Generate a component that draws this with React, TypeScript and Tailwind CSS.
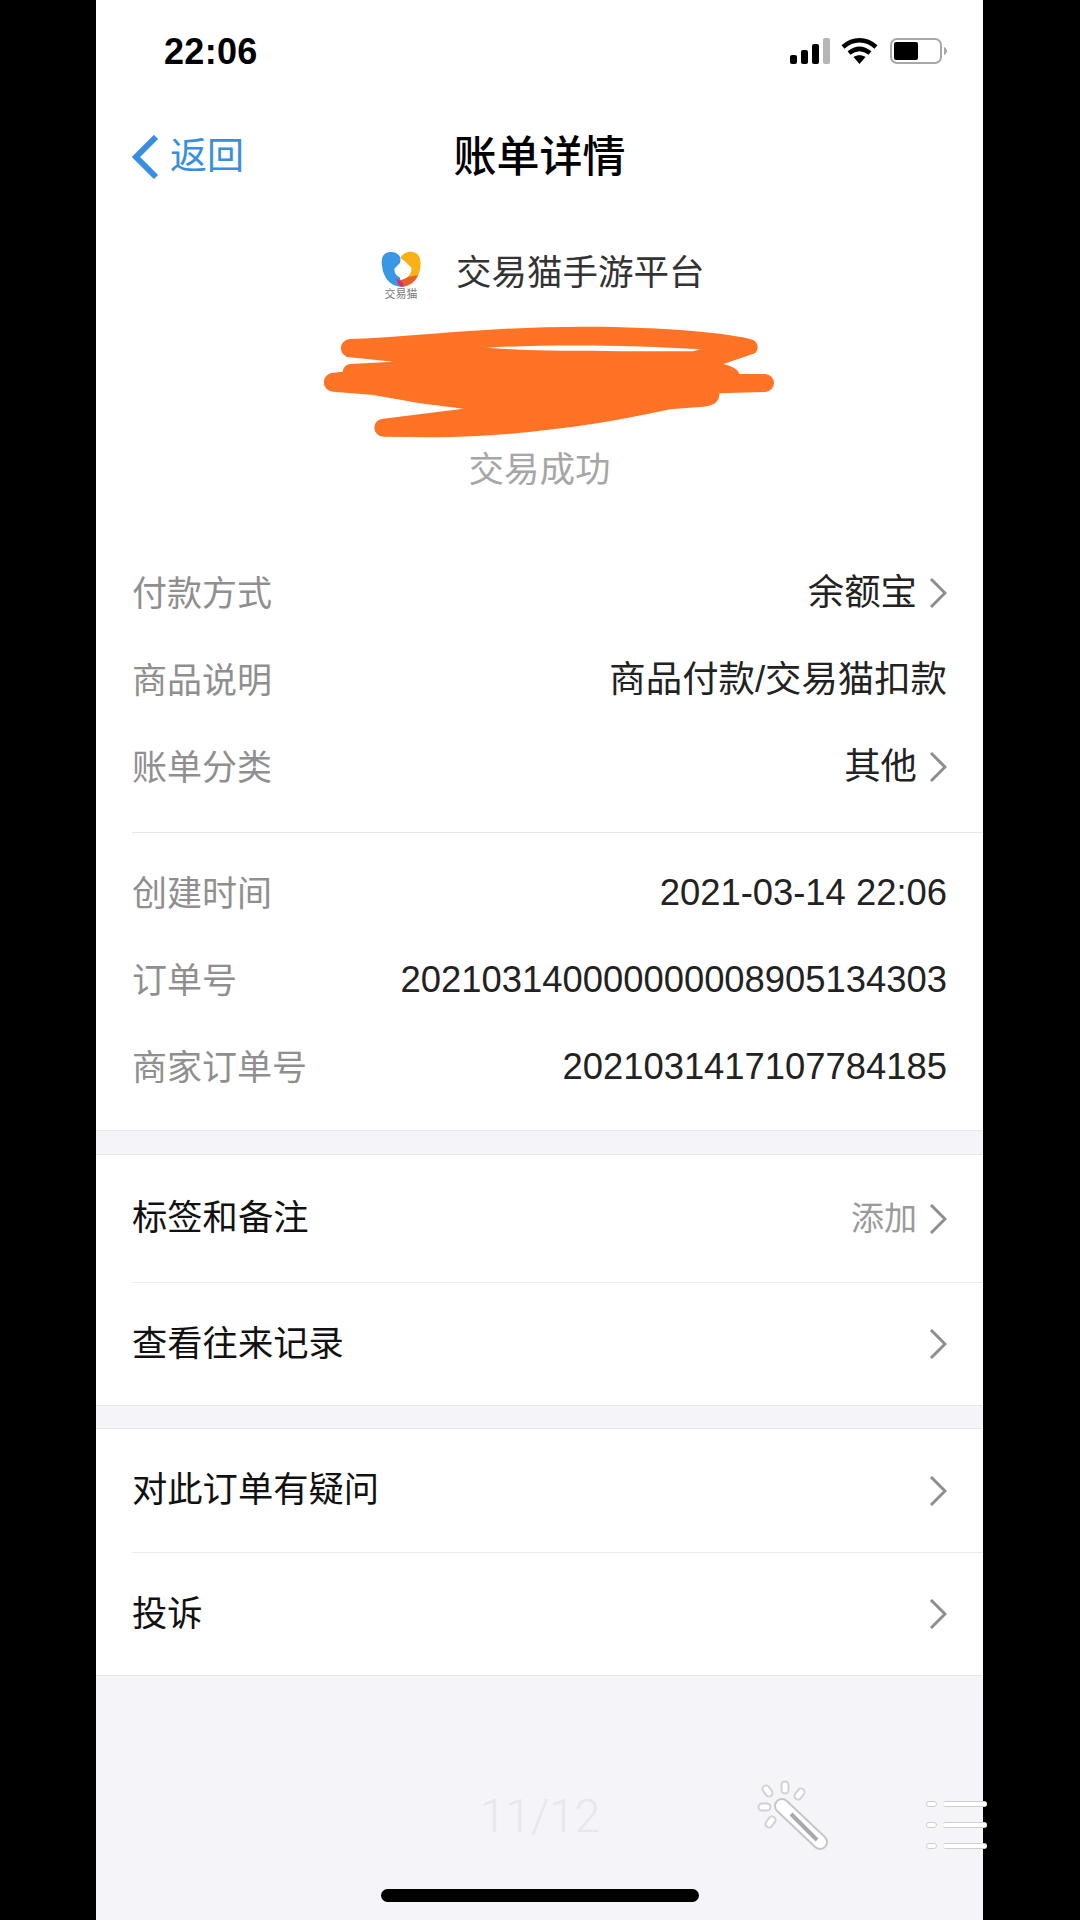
const cjk = "font-['Liberation_Sans','Noto_Sans_CJK_SC',sans-serif]";

function Chevron({ className = "" }: { className?: string }) {
  return (
    <svg width="18" height="32" viewBox="0 0 18 32" fill="none" className={className}>
      <path d="M2 2l14 14L2 30" stroke="#8e8e8e" strokeWidth="3" />
    </svg>
  );
}

function InfoRow({ label, value, arrow }: { label: string; value: string; arrow?: boolean }) {
  return (
    <div className="flex h-[87px] items-center justify-between">
      <span className="mt-[2px] text-[35px] text-[#8f8f8f]">{label}</span>
      <span className="flex items-center gap-[12px] text-[36.4px] text-[#222222]">
        {value}
        {arrow && <Chevron />}
      </span>
    </div>
  );
}

function LinkRow({ label, note, height }: { label: string; note?: string; height: string }) {
  return (
    <div className={`flex items-center justify-between pr-[36px] ${height}`}>
      <span className="text-[35.3px] text-[#111111]">{label}</span>
      <span className="flex items-center gap-[12px] text-[33px] text-[#9a9a9a]">
        {note}
        <Chevron />
      </span>
    </div>
  );
}

function Logo() {
  return (
    <div className="mt-[5px] flex w-[44px] flex-col items-center">
      <svg width="40" height="36" viewBox="0 0 37 33">
        <path d="M1 14C0 8 1 2 7 1c5-1 9 1 11 5 0 8-3 14 1 23l-1 4C8 32 2 24 1 14z" fill="#3a97e4" />
        <path d="M18 6c3-5 8-6 12-5 5 1 7 6 6.500 12-.2 3-.5 6-2 9L24 26c2-6 2-12-6-20z" fill="#fbb016" />
        <path d="M34.500 22c-2.500 6-7.500 10-14.500 11l-4-6c4 0 7-2 9-3z" fill="#ea5e28" />
        <path d="M14 25l6 4 1 4h-3c-2-2-3-5-4-8z" fill="#c8327a" />
        <path d="M20.500 8l7.500 7c1 5-3 10-8 10-5-1-8-4-7.500-9z" fill="#ffffff" />
      </svg>
      <span className="mt-[1px] whitespace-nowrap text-[11px] leading-[12px] text-[#7a7a7a]">交易猫</span>
    </div>
  );
}

function Scribble() {
  return (
    <svg width="500" height="290" viewBox="0 0 1500 870" className="absolute left-[204px] top-[-107px]">
      <path
        fill="#ff7326"
        d="M150 357C300 355 550 320 850 320c250 0 450 20 510 40a25 25 0 0 1 5 40l-95 32c30 8 45 18 48 30h77a27 27 0 0 1 0 54l-137 4c2 25-18 38-48 40l-100 8c-210 47-460 82-710 84l-150-2a27 27 0 0 1 0-54l240-30-130-16-140-25-120-10a27 27 0 0 1 0-57l28-3a25 25 0 0 1 22-23l130-7-130-13a27 27 0 0 1 0-55z"
      />
      <path fill="#ffffff" d="M560 383c190-11 440-8 640 5l-20 6c-180-2-430 4-620-11z" />
    </svg>
  );
}

function Wand() {
  return (
    <svg width="90" height="90" viewBox="0 0 90 90" fill="none" className="absolute left-[654px] top-[1775px] blur-[0.5px]">
      <path d="M32 31l38 36" stroke="#c6c6c9" strokeWidth="16" strokeLinecap="round" />
      <path d="M32 31l38 36" stroke="#ffffff" strokeWidth="12" strokeLinecap="round" />
      <path d="M41 39l26 26" stroke="#a9a9ab" strokeWidth="4" />
      <g stroke="#d2d2d5" strokeWidth="9" strokeLinecap="round">
        <path d="M16 14l3 4M35 10v5M51 17l-3 4M12 32h5M22 45l-3 4" />
      </g>
      <g stroke="#ffffff" strokeWidth="5" strokeLinecap="round">
        <path d="M16 14l3 4M35 10v5M51 17l-3 4M12 32h5M22 45l-3 4" />
      </g>
    </svg>
  );
}

function MenuLines() {
  return (
    <div className="absolute left-[830px] top-[1801px] flex flex-col gap-[15px]">
      {[0, 1, 2].map((i) => (
        <div key={i} className="flex items-center gap-[6px]">
          <div className="h-[6px] w-[11px] rounded-full border border-[#cfcfd1] bg-white" />
          <div className="h-[6px] w-[44px] rounded-full border-y border-[#cfcfd1] bg-white" />
        </div>
      ))}
    </div>
  );
}

export default function App() {
  return (
    <div className="flex h-[1920px] w-[1080px] overflow-hidden bg-black pl-[96px]">
      <div className={`relative h-[1920px] w-[887px] bg-[#f4f4f9] ${cjk}`}>
        <div className="border-b border-[#e8e8ea] bg-white">
          {/* status bar */}
          <div className="flex h-[102px] items-center justify-between pl-[68px] pr-[36px]">
            <span className="mt-[2px] text-[36px] font-bold tracking-[0.3px] text-black">22:06</span>
            <div className="flex items-center">
              <svg width="41" height="26" viewBox="0 0 41 26">
                <rect x="0" y="17" width="7" height="9" rx="2" fill="#000" />
                <rect x="11" y="12" width="7" height="14" rx="2" fill="#000" />
                <rect x="22" y="6" width="7" height="20" rx="2" fill="#000" />
                <rect x="33" y="0" width="7" height="26" rx="2" fill="#b5b5b5" />
              </svg>
              <svg width="37" height="26" viewBox="0 0 37 26" className="ml-[10px]" fill="none">
                <path d="M2 9c10-9 23-9 33 0" stroke="#000" strokeWidth="4.5" />
                <path d="M8 15c7-5.500 14-5.500 21 0" stroke="#000" strokeWidth="4.500" />
                <path d="M18.500 26l-6-7c3.500-2.500 8.500-2.500 12 0z" fill="#000" />
              </svg>
              <svg width="57" height="26" viewBox="0 0 57 26" className="ml-[12px]" fill="none">
                <rect x="1" y="1" width="50" height="24" rx="6" stroke="#a8a8a8" strokeWidth="2" />
                <rect x="4" y="4" width="24" height="18" rx="2" fill="#000" />
                <path d="M54 9c2 1 3 2.500 3 4s-1 3-3 4z" fill="#a8a8a8" />
              </svg>
            </div>
          </div>

          {/* nav */}
          <div className="relative flex h-[108px] items-center justify-center">
            <div className="absolute left-[35px] top-[27px] flex items-center gap-[11px]">
              <svg width="28" height="44" viewBox="0 0 28 44" fill="none">
                <path d="M25 2L5 22l20 20" stroke="#3a8ee0" strokeWidth="6" />
              </svg>
              <span className="text-[37px] text-[#3a8ee0]">返回</span>
            </div>
            <span className="mt-[2px] text-[43px] font-medium text-black">账单详情</span>
          </div>

          {/* merchant */}
          <div className="mt-[29px] flex h-[68px] items-center pl-[283px]">
            <Logo />
            <span className="ml-[33px] mt-[2px] text-[35.500px] text-[#333333]">交易猫手游平台</span>
          </div>
          <div className="relative mt-[20px] h-[110px]">
            <Scribble />
          </div>
          <div className="flex h-[66px] items-center justify-center pt-[2px] text-[35.500px] text-[#a6a6a6]">交易成功</div>

          {/* bill info */}
          <div className="mt-[47px] pl-[36px] pr-[36px]">
            <InfoRow label="付款方式" value="余额宝" arrow />
            <InfoRow label="商品说明" value="商品付款/交易猫扣款" />
            <InfoRow label="账单分类" value="其他" arrow />
          </div>
          <div className="ml-[36px] mt-[21px] border-t border-[#e6e6e6]" />
          <div className="mt-[17px] pb-[19px] pl-[36px] pr-[36px]">
            <InfoRow label="创建时间" value="2021-03-14 22:06" />
            <InfoRow label="订单号" value="202103140000000008905134303" />
            <InfoRow label="商家订单号" value="2021031417107784185" />
          </div>
        </div>

        <div className="mt-[23px] border-y border-[#e8e8ea] bg-white pl-[36px]">
          <LinkRow label="标签和备注" note="添加" height="h-[127px]" />
          <div className="border-t border-[#ebebeb]" />
          <LinkRow label="查看往来记录" height="h-[122px]" />
        </div>

        <div className="mt-[22px] border-y border-[#e8e8ea] bg-white pl-[36px]">
          <LinkRow label="对此订单有疑问" height="h-[123px]" />
          <div className="border-t border-[#ebebeb]" />
          <LinkRow label="投诉" height="h-[122px]" />
        </div>

        {/* floating overlay bits */}
        <span className="absolute left-[384px] top-[1782px] font-['Roboto',sans-serif] text-[46px] font-light text-[#e8e8ea]">11/12</span>
        <Wand />
        <MenuLines />
        <div className="absolute left-[285px] top-[1889px] h-[13px] w-[318px] rounded-full bg-black" />
      </div>
    </div>
  );
}
